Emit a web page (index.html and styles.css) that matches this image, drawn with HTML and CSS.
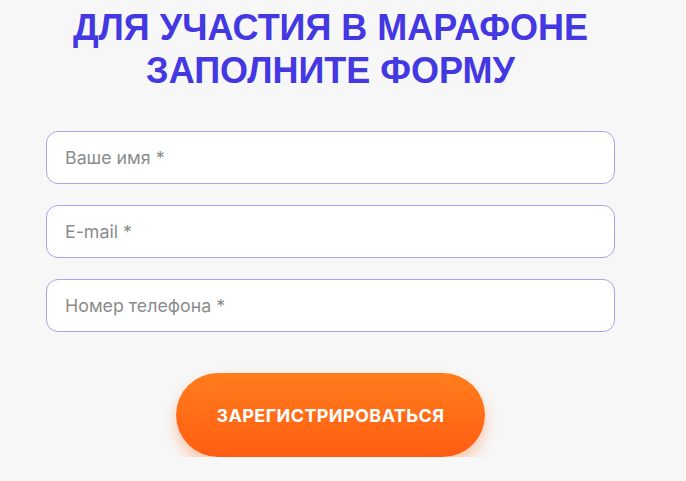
FILE: index.html
```html
<!DOCTYPE html>
<html lang="ru">
<head>
<meta charset="utf-8">
<link rel="stylesheet" href="styles.css">
</head>
<body>
<main class="page">
  <h1 class="title">ДЛЯ УЧАСТИЯ В МАРАФОНЕ<br>ЗАПОЛНИТЕ ФОРМУ</h1>
  <form class="form">
    <input class="field" type="text" placeholder="Ваше имя *">
    <input class="field" type="email" placeholder="E-mail *">
    <input class="field" type="tel" placeholder="Номер телефона *">
    <button class="submit" type="button">ЗАРЕГИСТРИРОВАТЬСЯ</button>
  </form>
</main>
</body>
</html>
```
FILE: styles.css
```css
html, body {
  margin: 0;
  padding: 0;
  background: #f7f7f7;
}
.page {
  width: 569px;
  margin-left: 46px;
  display: flex;
  flex-direction: column;
  align-items: center;
}
.title {
  margin: 6px 0 0;
  font-family: "Liberation Sans", Arial, sans-serif;
  font-weight: bold;
  font-size: 36px;
  line-height: 43px;
  color: #4338e2;
  text-align: center;
  white-space: nowrap;
}
.form {
  width: 100%;
  margin-top: 39px;
  display: flex;
  flex-direction: column;
  align-items: center;
  gap: 21px;
}
.field {
  box-sizing: border-box;
  width: 100%;
  height: 53px;
  border: 1px solid #a9a3ea;
  border-radius: 12px;
  background: #ffffff;
  padding: 0 18px;
  font-family: Inter, "Noto Sans", sans-serif;
  font-size: 17.8px;
  color: #333;
  outline: none;
}
.field::placeholder {
  color: #8c8c8c;
}
.submit {
  margin-top: 20px;
  width: 309px;
  height: 84px;
  border: none;
  border-radius: 42px;
  background: linear-gradient(180deg, #ff7d1c 0%, #ff5d12 100%);
  box-shadow: 0 8px 14px rgba(255, 110, 30, 0.35);
  color: #ffffff;
  font-family: Inter, "Noto Sans", sans-serif;
  font-weight: 700;
  font-size: 18px;
  letter-spacing: 0.4px;
  cursor: pointer;
}
```
